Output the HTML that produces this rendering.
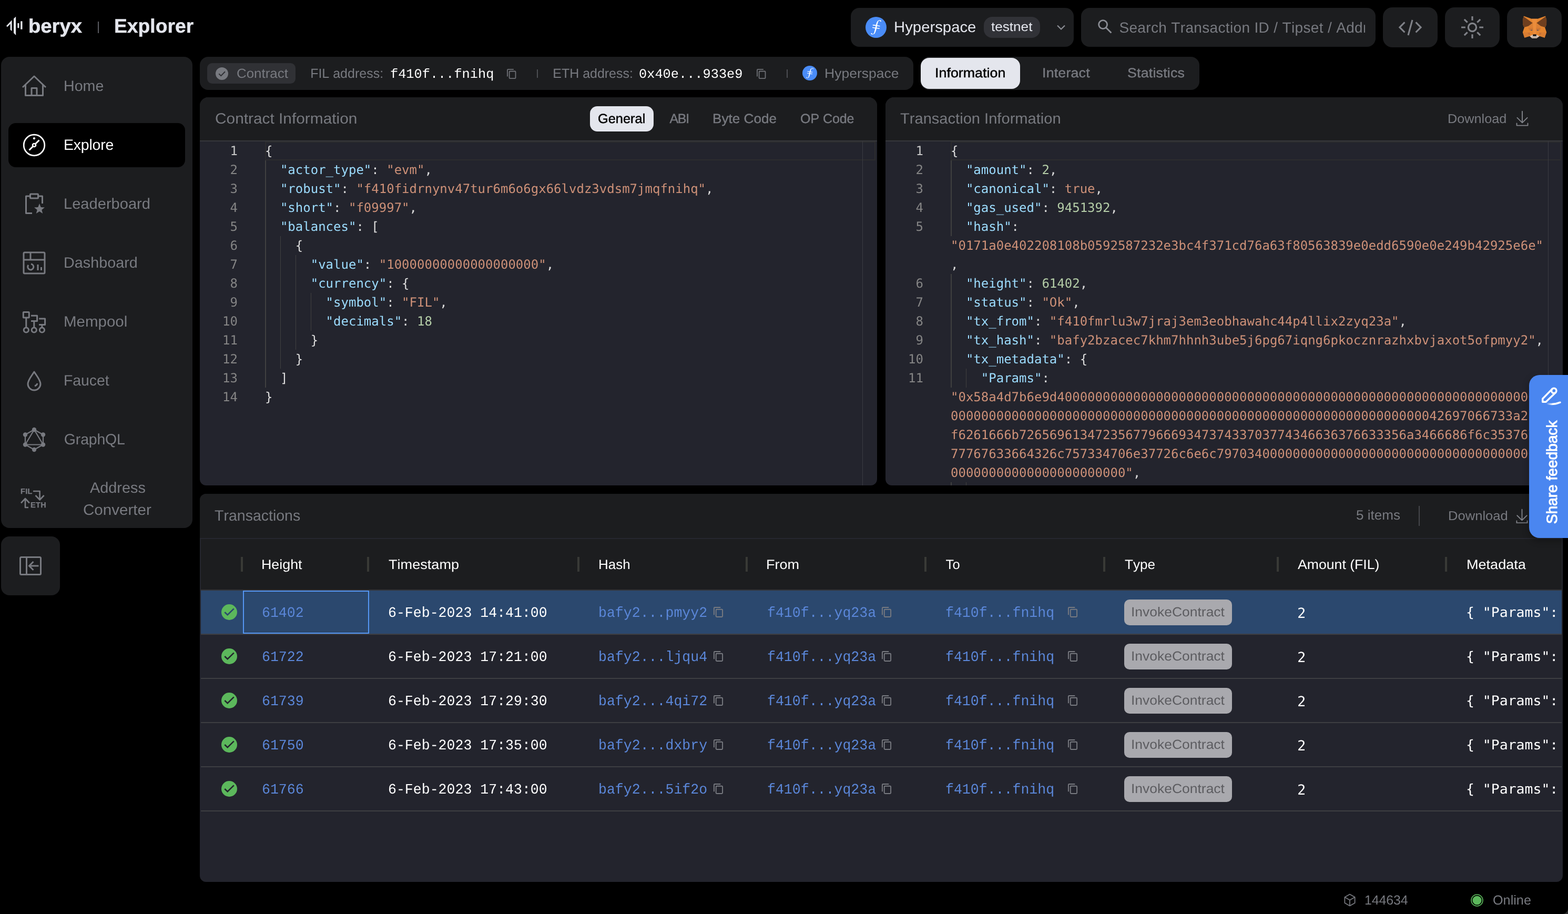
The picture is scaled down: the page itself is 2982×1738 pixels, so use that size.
<!DOCTYPE html>
<html lang="en">
<head>
<meta charset="utf-8">
<title>Beryx Explorer</title>
<style>
:root{--mono:"DejaVu Sans Mono","Liberation Mono",monospace;--lmono:"Liberation Mono",monospace}
html,body{margin:0;padding:0;background:#000}
body{position:relative;width:2982px;height:1738px;overflow:hidden;font-family:"Liberation Sans",sans-serif;font-kerning:none;-webkit-font-smoothing:antialiased;text-rendering:geometricPrecision}
#app{position:absolute;left:0;top:0;width:2982px;height:1738px;will-change:transform}
.b{position:absolute;display:block;box-sizing:border-box}
.t{position:absolute;display:block;white-space:pre;line-height:1;margin:0;padding:0;font-weight:400}
.k{color:#9cdcfe}.s{color:#ce9178}.n{color:#b5cea8}.p{color:#dcdcdc}
.cl{position:absolute;display:block;white-space:pre;font:24px/36px var(--mono);color:#d4d4d4;height:36px}
.ln{position:absolute;display:block;white-space:pre;font:24px/36px var(--mono);color:#858585;text-align:right;width:80px;height:36px}
</style>
</head>
<body>
<div id="app">
<header>
<svg class="b" style="left:10px;top:28px;" width="36" height="42" viewBox="10 28 36 42"><g fill="#e4e6ed"><path d="M12 49.2 L22.6 38.3 V59.2 L19.6 56.4 V45.6 L14 51.2 Z"/><path d="M26 35.6 L30.2 31.4 V67 L26 62.8 Z"/><rect x="33.4" y="44" width="3" height="9.2" rx="0.6"/><rect x="39.2" y="40.2" width="3.3" height="15.6" rx="0.6"/></g></svg>
<span class="t" style="left:54.08px;top:26px;font-size:37px;line-height:47px;font-weight:700;color:#e4e6ed;transform-origin:0 0;transform:scaleX(1.0331);-webkit-text-stroke:0.5px #e4e6ed;">beryx</span>
<div class="b" style="left:186px;top:41px;width:2px;height:22px;background:#5a5c62;"></div>
<span class="t" style="left:217.41px;top:26px;font-size:37px;line-height:47px;font-weight:700;color:#e4e6ed;transform-origin:0 0;transform:scaleX(1.0069);-webkit-text-stroke:0.4px #e4e6ed;">Explorer</span>
<div class="b" style="left:1618px;top:15px;width:424px;height:74px;background:#1c1d1f;border-radius:16px;"></div>
<svg class="b" style="left:1646px;top:32px;" width="40" height="40" viewBox="0 0 40 40"><circle cx="20" cy="20" r="20" fill="#4a8cf7"/><path d="M21.9 17.6 l-.6 3.2 5.7.8-.4 1.5-5.6-.8c-.4 1.3-.6 2.7-1.1 3.9-.5 1.4-1 2.8-1.6 4.1-.8 1.7-2.2 2.9-4.1 3.2-1.1.2-2.3.1-3.2-.6-.3-.2-.6-.6-.6-.9 0-.4.2-.9.5-1.1.2-.1.7 0 1 .1.3.3.6.7.8 1.1.6.8 1.4.9 2.2.3.9-.8 1.4-1.9 1.7-3 .6-2.4 1.2-4.7 1.7-7.1v-.4l-5.300-.8.2-1.5 5.5.8.700-3.100-5.7-.9.2-1.6 5.900.8c.2-.6.3-1.100.5-1.600.5-1.800 1-3.600 2.200-5.200 1.200-1.600 2.600-2.600 4.700-2.500.900 0 1.800.300 2.400 1 .100.100.300.300.300.500 0 .400 0 .900-.300 1.200-.400.300-.900.200-1.300-.200-.300-.300-.500-.600-.800-.900-.600-.800-1.500-.900-2.200-.200-.500.500-1 1.200-1.300 1.900-.700 2.100-1.200 4.300-1.900 6.500l5.500.800-.400 1.500z" fill="#fff"/></svg>
<span class="t" style="left:1700.00px;top:34px;font-size:28.5px;line-height:36px;color:#e4e6ed;transform-origin:0 0;transform:scaleX(1.0285);">Hyperspace</span>
<div class="b" style="left:1871px;top:32px;width:107px;height:40px;background:#313237;border-radius:16px;"></div>
<span class="t" style="left:1885.30px;top:36px;font-size:24.5px;line-height:31px;color:#e4e6ed;transform-origin:0 0;transform:scaleX(1.0658);">testnet</span>
<svg class="b" style="left:2006px;top:42px;" width="24" height="20" viewBox="0 0 24 20"><path d="M5 6.500 L12 13.500 L19 6.500" fill="none" stroke="#8b8d94" stroke-width="2.200"/></svg>
<div class="b" style="left:2056px;top:15px;width:560px;height:74px;background:#1c1d1f;border-radius:16px;"></div>
<svg class="b" style="left:2086px;top:35px;" width="32" height="32" viewBox="0 0 32 32"><circle cx="11.6" cy="11.6" r="8" fill="none" stroke="#8b8d94" stroke-width="2.8"/><path d="M17.4 17.4 L27.4 27.4" stroke="#8b8d94" stroke-width="2.8" fill="none"/></svg>
<div class="b" style="left:2120px;top:20px;width:476px;height:64px;overflow:hidden">
<span class="t" style="left:8.43px;top:15px;font-size:28px;line-height:35px;color:#787a80;letter-spacing:0.340px;">Search Transaction ID / Tipset / Address</span>
</div>
<div class="b" style="left:2630px;top:14px;width:104px;height:76px;background:#1c1d1f;border-radius:18px;"></div>
<svg class="b" style="left:2656px;top:34px;" width="52" height="36" viewBox="0 0 52 36"><g fill="none" stroke="#808288" stroke-width="3.1"><path d="M15.400 8.300 L5.900 17.900 L15.400 27.500"/><path d="M36.600 8.300 L46.100 17.900 L36.600 27.500"/><path d="M30 4 L22 33"/></g></svg>
<div class="b" style="left:2748px;top:14px;width:104px;height:76px;background:#1c1d1f;border-radius:18px;"></div>
<svg class="b" style="left:2776px;top:28.4px;" width="48" height="48" viewBox="-24 -24 48 48"><g fill="none" stroke="#808288" stroke-width="3.2"><circle r="7.600"/><path d="M0 -21V-13.200M0 21V13.200M-21 0H-13.200M21 0H13.200M-15.200 -15.200L-9.300 -9.300M15.200 15.200L9.300 9.300M-15.200 15.200L-9.300 9.300M15.200 -15.200L9.300 -9.300"/></g></svg>
<div class="b" style="left:2866px;top:14px;width:104px;height:76px;background:#1c1d1f;border-radius:18px;"></div>
<svg class="b" style="left:2880px;top:20px;" width="80" height="65" viewBox="0 0 1808 1469"><path d="M405 240 L740 355 H1000 L1335 240 L1382 400 L1380 585 L1345 690 L1312 722 L1382 935 L1302 1172 L1080 1102 L950 1196 H770 L660 1102 L437 1172 L358 935 L430 722 L398 690 L363 585 L360 400 Z" fill="#e4852f"/><path d="M398 262 L787 535 L612 664 L438 716 L398 690 L363 585 L360 400 Z" fill="#6f3f1f"/><path d="M1342 262 L953 535 L1128 664 L1302 716 L1345 690 L1380 585 L1382 400 Z" fill="#6f3f1f"/><path d="M742 358 H998 L940 560 L935 1010 H805 L800 560 Z" fill="#ea8c3b"/><path d="M596 748 L800 742 L798 860 L655 862 Z" fill="#cf7733"/><path d="M1144 748 L940 742 L942 860 L1085 862 Z" fill="#cf7733"/><path d="M612 664 L787 535 L800 742 L596 748 Z" fill="#dc8034"/><path d="M1128 664 L953 535 L940 742 L1144 748 Z" fill="#dc8034"/><ellipse cx="737" cy="846" rx="38" ry="18" fill="#3f4d6b"/><ellipse cx="1003" cy="846" rx="38" ry="18" fill="#3f4d6b"/><path d="M358 935 L570 946 L652 1092 L437 1172 Z" fill="#d97e33"/><path d="M1382 935 L1170 946 L1088 1092 L1302 1172 Z" fill="#d97e33"/><path d="M566 948 L676 950 L654 1086 Z" fill="#c67136"/><path d="M1174 948 L1064 950 L1086 1086 Z" fill="#c67136"/><path d="M660 1102 L792 1040 H948 L1080 1102 L950 1196 H770 Z" fill="#d7c3b4"/><path d="M772 1128 H948 L992 1162 L950 1196 H770 L728 1162 Z" fill="#b9ab9f"/><path d="M796 1024 H944 V1100 H796 Z" fill="#141414"/></svg>
</header>
<nav>
<div class="b" style="left:2px;top:108px;width:364px;height:896px;background:#1c1d1f;border-radius:16px;"></div>
<div class="b" style="left:16px;top:234px;width:336px;height:84px;background:#000;border-radius:14px;"></div>
<span class="t" style="left:120.95px;top:146px;font-size:28.5px;line-height:36px;color:#787a80;transform-origin:0 0;transform:scaleX(1.0039);">Home</span>
<span class="t" style="left:120.96px;top:258px;font-size:28.5px;line-height:36px;color:#ffffff;letter-spacing:-0.205px;">Explore</span>
<span class="t" style="left:120.91px;top:370px;font-size:28.5px;line-height:36px;color:#787a80;transform-origin:0 0;transform:scaleX(1.0206);">Leaderboard</span>
<span class="t" style="left:120.94px;top:482px;font-size:28.5px;line-height:36px;color:#787a80;transform-origin:0 0;transform:scaleX(1.0092);">Dashboard</span>
<span class="t" style="left:120.88px;top:594px;font-size:28.5px;line-height:36px;color:#787a80;transform-origin:0 0;transform:scaleX(1.0348);">Mempool</span>
<span class="t" style="left:120.96px;top:706px;font-size:28.5px;line-height:36px;color:#787a80;letter-spacing:-0.076px;">Faucet</span>
<span class="t" style="left:121.87px;top:818px;font-size:28.5px;line-height:36px;color:#787a80;letter-spacing:-0.191px;">GraphQL</span>
<span class="t" style="left:170.54px;top:910px;font-size:28.5px;line-height:36px;color:#787a80;transform-origin:0 0;transform:scaleX(1.0129);">Address</span>
<span class="t" style="left:157.50px;top:952px;font-size:28.5px;line-height:36px;color:#787a80;transform-origin:0 0;transform:scaleX(1.0380);">Converter</span>
<svg class="b" style="left:41px;top:139.5px;" width="48" height="48" viewBox="-24.0 -24.0 48 48"><g fill="none" stroke="#787a80" stroke-width="3" stroke-linejoin="round"><path d="M-22 2 L0 -19 L22 2"/><path d="M-16.500 -3 V17.500 H16.500 V-3"/><path d="M-5 17 V3.500 H5 V17"/></g></svg>
<svg class="b" style="left:41px;top:251.5px;" width="48" height="48" viewBox="-24.0 -24.0 48 48"><g fill="none" stroke="#fff" stroke-width="3" stroke-linejoin="round"><g stroke-width="2.700"><circle r="19.800"/><circle r="3"/></g><path d="M2.200 -2.200 L9.500 -9.500 M-2.200 2.200 L-9.500 9.500"/><circle cx="0" cy="-12.800" r="2.100" fill="#fff" stroke="none"/></g></svg>
<svg class="b" style="left:41px;top:363.5px;" width="48" height="48" viewBox="-24.0 -24.0 48 48"><g fill="none" stroke="#787a80" stroke-width="3" stroke-linejoin="round"><path d="M-4 17.500 H-15.500 V-15 H-9 M9 -15 H15.500 V-1"/><rect x="-7.500" y="-19" width="15" height="8" rx="1"/><path d="M10 -1 L12.700 6 L20 6.500 L14.300 11 L16.200 18 L10 14 L3.800 18 L5.700 11 L0 6.500 L7.300 6 Z" fill="#787a80" stroke="none"/></g></svg>
<svg class="b" style="left:41px;top:475.5px;" width="48" height="48" viewBox="-24.0 -24.0 48 48"><g fill="none" stroke="#787a80" stroke-width="3" stroke-linejoin="round"><rect x="-20" y="-20" width="40" height="40" rx="2"/><path d="M-20 -6 H20 M-7 -20 V-6"/><path d="M-11 4 a5.500 5.500 0 1 0 5 -2"/><path d="M7 3 V14 M13.500 8 V14"/></g></svg>
<svg class="b" style="left:41px;top:587.5px;" width="48" height="48" viewBox="-24.0 -24.0 48 48"><g fill="none" stroke="#787a80" stroke-width="3" stroke-linejoin="round"><rect x="-20.700" y="-18.400" width="11" height="10.500" rx="1"/><circle cx="-15.200" cy="15.500" r="4.600"/><circle cx="-0.200" cy="15.500" r="4.600"/><circle cx="14.900" cy="15.500" r="4.600"/><path d="M-15.200 -7.900 V10.900 M-6 -11.800 H5.600 V-1.400 H-6 M-0.200 -1.400 V10.900 M9.100 -6 H20.600 V5.600 H9.100 M14.900 5.600 V10.900"/></g></svg>
<svg class="b" style="left:41px;top:699.5px;" width="48" height="48" viewBox="-24.0 -24.0 48 48"><g fill="none" stroke="#787a80" stroke-width="3" stroke-linejoin="round"><path d="M0 -17 C-5 -9 -12 -1 -12 6 a12 12 0 0 0 24 0 C12 -1 5 -9 0 -17 Z"/><path d="M1 10 Q5 9 6 5"/></g></svg>
<svg class="b" style="left:41px;top:811.5px;" width="48" height="48" viewBox="-24.0 -24.0 48 48"><g fill="none" stroke="#787a80" stroke-width="3" stroke-linejoin="round"><g stroke-width="2.200"><path d="M0 -19 L17 -9.500 V9.500 L0 19 L-17 9.500 V-9.500 Z"/><path d="M0 -19 L17 9.500 H-17 Z"/></g><circle cx="0" cy="-19" r="4.200" fill="#787a80" stroke="none"/><circle cx="17" cy="-9.5" r="4.200" fill="#787a80" stroke="none"/><circle cx="17" cy="9.5" r="4.200" fill="#787a80" stroke="none"/><circle cx="0" cy="19" r="4.200" fill="#787a80" stroke="none"/><circle cx="-17" cy="9.5" r="4.200" fill="#787a80" stroke="none"/><circle cx="-17" cy="-9.5" r="4.200" fill="#787a80" stroke="none"/></g></svg>
<svg class="b" style="left:36px;top:923.5px;" width="56" height="48" viewBox="36 -24 56 48"><g fill="none" stroke="#787a80" stroke-width="2.600" stroke-linejoin="round"><path d="M63 -14 H75.600 V1.500 M67.500 -6 L75.600 2.500 L83.700 -6"/><path d="M54 17 H48 V1 M40 8.500 L48 0 L56 8.500"/></g></svg>
<span class="t" style="left:39px;top:928.0px;font-size:14.5px;font-weight:700;color:#787a80;letter-spacing:0.300px;-webkit-text-stroke:0.300px #787a80">FIL</span>
<span class="t" style="left:58px;top:954.0px;font-size:14.5px;font-weight:700;color:#787a80;letter-spacing:0.300px;-webkit-text-stroke:0.300px #787a80">ETH</span>
<div class="b" style="left:2px;top:1020px;width:112px;height:112px;background:#1c1d1f;border-radius:16px;"></div>
<svg class="b" style="left:36px;top:1056px;" width="44" height="40" viewBox="0 0 44 40"><g fill="none" stroke="#787a80" stroke-width="3"><rect x="2.500" y="3.500" width="39" height="33" rx="2"/><path d="M14.500 3.500V36.500M37.500 20H20M27.500 12L19.500 20L27.500 28"/></g></svg>
</nav>
<main>
<div class="b" style="left:380px;top:108px;width:1357px;height:63px;background:#1c1d1f;border-radius:16px;"></div>
<div class="b" style="left:394px;top:120px;width:168px;height:39px;background:#303135;border-radius:9.5px;"></div>
<svg class="b" style="left:410px;top:128px;" width="24" height="24" viewBox="0 0 24 24"><circle cx="12" cy="12" r="12" fill="#787a80"/><path d="M6.300 12.200 L10.300 16.100 L18 8.300" fill="none" stroke="#2f3034" stroke-width="2"/></svg>
<span class="t" style="left:449.88px;top:124px;font-size:25px;line-height:32px;color:#787a80;transform-origin:0 0;transform:scaleX(1.0362);">Contract</span>
<span class="t" style="left:590.15px;top:124px;font-size:25px;line-height:32px;color:#787a80;">FIL address:</span>
<span class="t" style="left:742.30px;top:126px;font-size:25px;line-height:32px;font-family:var(--lmono);color:#ffffff;transform-origin:0 0;transform:scaleX(1.0117);">f410f...fnihq</span>
<svg class="b" style="left:963px;top:130px;" width="19.5" height="21" viewBox="0 0 21 23"><g fill="none" stroke="#6e7076" stroke-width="2"><rect x="6" y="6" width="13" height="15" rx="1.500"/><path d="M15 2 H3.500 A1.500 1.500 0 0 0 2 3.500 V17"/></g></svg>
<div class="b" style="left:1021px;top:132px;width:2px;height:16px;background:#4c4e53;"></div>
<span class="t" style="left:1051.35px;top:124px;font-size:25px;line-height:32px;color:#787a80;letter-spacing:-0.027px;">ETH address:</span>
<span class="t" style="left:1215.47px;top:126px;font-size:25px;line-height:32px;font-family:var(--lmono);color:#ffffff;transform-origin:0 0;transform:scaleX(1.0126);">0x40e...933e9</span>
<svg class="b" style="left:1438px;top:130px;" width="19.5" height="21" viewBox="0 0 21 23"><g fill="none" stroke="#6e7076" stroke-width="2"><rect x="6" y="6" width="13" height="15" rx="1.500"/><path d="M15 2 H3.500 A1.500 1.500 0 0 0 2 3.500 V17"/></g></svg>
<div class="b" style="left:1496px;top:132px;width:2px;height:16px;background:#4c4e53;"></div>
<svg class="b" style="left:1526px;top:125px;" width="28" height="28" viewBox="0 0 40 40"><circle cx="20" cy="20" r="20" fill="#4a8cf7"/><path d="M21.9 17.6 l-.6 3.2 5.7.8-.4 1.5-5.6-.8c-.4 1.3-.6 2.7-1.1 3.9-.5 1.4-1 2.8-1.6 4.1-.8 1.7-2.2 2.9-4.1 3.2-1.1.2-2.3.1-3.2-.6-.3-.2-.6-.6-.6-.9 0-.4.2-.9.5-1.1.2-.1.7 0 1 .1.3.3.6.7.8 1.1.6.8 1.4.9 2.2.3.9-.8 1.4-1.9 1.7-3 .6-2.4 1.2-4.7 1.7-7.1v-.4l-5.300-.8.2-1.5 5.5.8.700-3.100-5.7-.9.2-1.6 5.900.8c.2-.6.3-1.100.5-1.600.5-1.800 1-3.600 2.200-5.200 1.200-1.600 2.600-2.600 4.700-2.500.900 0 1.800.300 2.400 1 .100.100.300.300.300.500 0 .400 0 .900-.300 1.200-.400.300-.900.200-1.300-.200-.300-.300-.500-.600-.800-.900-.600-.800-1.500-.900-2.200-.200-.500.500-1 1.200-1.300 1.900-.700 2.100-1.200 4.300-1.900 6.500l5.500.800-.400 1.500z" fill="#fff"/></svg>
<span class="t" style="left:1567.73px;top:124px;font-size:25px;line-height:32px;color:#787a80;transform-origin:0 0;transform:scaleX(1.0604);">Hyperspace</span>
<div class="b" style="left:1751px;top:108px;width:530px;height:63px;background:#1c1d1f;border-radius:16px;"></div>
<div class="b" style="left:1751px;top:110px;width:189px;height:59px;background:#e4e6ed;border-radius:16px;"></div>
<span class="t" style="left:1778.33px;top:123px;font-size:25px;line-height:32px;color:#000;letter-spacing:0.046px;transform-origin:0 0;transform:scaleX(1.0700);-webkit-text-stroke:0.5px #000;">Information</span>
<span class="t" style="left:1981.73px;top:123px;font-size:25px;line-height:32px;color:#787a80;letter-spacing:0.181px;transform-origin:0 0;transform:scaleX(1.0700);-webkit-text-stroke:0.4px #787a80;">Interact</span>
<span class="t" style="left:2143.99px;top:123px;font-size:25px;line-height:32px;color:#787a80;letter-spacing:0.193px;transform-origin:0 0;transform:scaleX(1.0700);-webkit-text-stroke:0.4px #787a80;">Statistics</span>
<section class="b" style="left:380px;top:185px;width:1288px;height:738px;background:#23242d;border-radius:16px 16px 12px 12px;overflow:hidden;"><div class="b" style="left:0;top:0;width:100%;height:84px;background:#1c1d1f;border-bottom:2px solid #36373b"></div></section>
<span class="t" style="left:408.58px;top:208px;font-size:28.5px;line-height:36px;color:#787a80;transform-origin:0 0;transform:scaleX(1.0471);">Contract Information</span>
<div class="b" style="left:1122px;top:202px;width:121px;height:48px;background:#e4e6ed;border-radius:14px;"></div>
<span class="t" style="left:1137.22px;top:210px;font-size:25px;line-height:32px;color:#000;transform-origin:0 0;transform:scaleX(1.0150);-webkit-text-stroke:0.5px #000;">General</span>
<span class="t" style="left:1273.55px;top:210px;font-size:25px;line-height:32px;color:#787a80;letter-spacing:-1.370px;-webkit-text-stroke:0.4px #787a80;">ABI</span>
<span class="t" style="left:1355.05px;top:210px;font-size:25px;line-height:32px;color:#787a80;transform-origin:0 0;transform:scaleX(1.0460);-webkit-text-stroke:0.4px #787a80;">Byte Code</span>
<span class="t" style="left:1522.02px;top:210px;font-size:25px;line-height:32px;color:#787a80;letter-spacing:-0.056px;-webkit-text-stroke:0.4px #787a80;">OP Code</span>
<div class="b" style="left:380px;top:269px;width:1288px;height:654px;overflow:hidden;border-radius:0 0 12px 12px">
<div class="b" style="left:124px;top:0;width:1161px;height:36px;border:2px solid #2c2c2e"></div>
<div class="b" style="left:1260px;top:0;width:1px;height:654px;background:#3a3b42"></div>
<div class="b" style="left:124.00px;top:36px;width:1.500px;height:432px;background:#404040"></div>
<div class="b" style="left:152.90px;top:180px;width:1.500px;height:252px;background:#404040"></div>
<div class="b" style="left:181.79px;top:216px;width:1.500px;height:180px;background:#404040"></div>
<div class="b" style="left:210.69px;top:288px;width:1.500px;height:72px;background:#404040"></div>
<span class="ln" style="left:-8px;top:0px;color:#c6c6c6">1</span>
<code class="cl" style="left:124px;top:0px"><span class="p">{</span></code>
<span class="ln" style="left:-8px;top:36px">2</span>
<code class="cl" style="left:124px;top:36px">  <span class="k">"actor_type"</span><span class="p">: </span><span class="s">"evm"</span><span class="p">,</span></code>
<span class="ln" style="left:-8px;top:72px">3</span>
<code class="cl" style="left:124px;top:72px">  <span class="k">"robust"</span><span class="p">: </span><span class="s">"f410fidrnynv47tur6m6o6gx66lvdz3vdsm7jmqfnihq"</span><span class="p">,</span></code>
<span class="ln" style="left:-8px;top:108px">4</span>
<code class="cl" style="left:124px;top:108px">  <span class="k">"short"</span><span class="p">: </span><span class="s">"f09997"</span><span class="p">,</span></code>
<span class="ln" style="left:-8px;top:144px">5</span>
<code class="cl" style="left:124px;top:144px">  <span class="k">"balances"</span><span class="p">: [</span></code>
<span class="ln" style="left:-8px;top:180px">6</span>
<code class="cl" style="left:124px;top:180px">    <span class="p">{</span></code>
<span class="ln" style="left:-8px;top:216px">7</span>
<code class="cl" style="left:124px;top:216px">      <span class="k">"value"</span><span class="p">: </span><span class="s">"10000000000000000000"</span><span class="p">,</span></code>
<span class="ln" style="left:-8px;top:252px">8</span>
<code class="cl" style="left:124px;top:252px">      <span class="k">"currency"</span><span class="p">: {</span></code>
<span class="ln" style="left:-8px;top:288px">9</span>
<code class="cl" style="left:124px;top:288px">        <span class="k">"symbol"</span><span class="p">: </span><span class="s">"FIL"</span><span class="p">,</span></code>
<span class="ln" style="left:-8px;top:324px">10</span>
<code class="cl" style="left:124px;top:324px">        <span class="k">"decimals"</span><span class="p">: </span><span class="n">18</span></code>
<span class="ln" style="left:-8px;top:360px">11</span>
<code class="cl" style="left:124px;top:360px">      <span class="p">}</span></code>
<span class="ln" style="left:-8px;top:396px">12</span>
<code class="cl" style="left:124px;top:396px">    <span class="p">}</span></code>
<span class="ln" style="left:-8px;top:432px">13</span>
<code class="cl" style="left:124px;top:432px">  <span class="p">]</span></code>
<span class="ln" style="left:-8px;top:468px">14</span>
<code class="cl" style="left:124px;top:468px"><span class="p">}</span></code>
</div>
<section class="b" style="left:1684px;top:185px;width:1288px;height:738px;background:#23242d;border-radius:16px 16px 12px 12px;overflow:hidden;"><div class="b" style="left:0;top:0;width:100%;height:84px;background:#1c1d1f;border-bottom:2px solid #36373b"></div></section>
<span class="t" style="left:1712.25px;top:208px;font-size:28.5px;line-height:36px;color:#787a80;transform-origin:0 0;transform:scaleX(1.0209);">Transaction Information</span>
<span class="t" style="left:2752.53px;top:211px;font-size:24.5px;line-height:31px;color:#787a80;transform-origin:0 0;transform:scaleX(1.0307);">Download</span>
<svg class="b" style="left:2882px;top:210px;" width="26" height="30" viewBox="0 0 26 30"><g fill="none" stroke="#83858b" stroke-width="1.9" stroke-linecap="round" stroke-linejoin="round"><path d="M13 1.8 V23 M3.4 13.8 L13 23.4 L22.6 13.8 M2.5 24.5 V28.6 H23.5 V24.5"/></g></svg>
<div class="b" style="left:1684px;top:269px;width:1288px;height:654px;overflow:hidden;border-radius:0 0 12px 12px">
<div class="b" style="left:124px;top:0;width:1161px;height:36px;border:2px solid #2c2c2e"></div>
<div class="b" style="left:1260px;top:0;width:1px;height:654px;background:#3a3b42"></div>
<div class="b" style="left:124.00px;top:36px;width:1.500px;height:144px;background:#404040"></div>
<div class="b" style="left:124.00px;top:252px;width:1.500px;height:216px;background:#404040"></div>
<div class="b" style="left:152.90px;top:432px;width:1.500px;height:36px;background:#404040"></div>
<div class="b" style="left:124.00px;top:648px;width:1.500px;height:36px;background:#404040"></div>
<div class="b" style="left:152.90px;top:648px;width:1.500px;height:36px;background:#404040"></div>
<span class="ln" style="left:-8px;top:0px;color:#c6c6c6">1</span>
<code class="cl" style="left:124px;top:0px"><span class="p">{</span></code>
<span class="ln" style="left:-8px;top:36px">2</span>
<code class="cl" style="left:124px;top:36px">  <span class="k">"amount"</span><span class="p">: </span><span class="n">2</span><span class="p">,</span></code>
<span class="ln" style="left:-8px;top:72px">3</span>
<code class="cl" style="left:124px;top:72px">  <span class="k">"canonical"</span><span class="p">: </span><span class="s">true</span><span class="p">,</span></code>
<span class="ln" style="left:-8px;top:108px">4</span>
<code class="cl" style="left:124px;top:108px">  <span class="k">"gas_used"</span><span class="p">: </span><span class="n">9451392</span><span class="p">,</span></code>
<span class="ln" style="left:-8px;top:144px">5</span>
<code class="cl" style="left:124px;top:144px">  <span class="k">"hash"</span><span class="p">: </span></code>
<code class="cl" style="left:124px;top:180px"><span class="s">"0171a0e402208108b0592587232e3bc4f371cd76a63f80563839e0edd6590e0e249b42925e6e"</span></code>
<code class="cl" style="left:124px;top:216px"><span class="p">,</span></code>
<span class="ln" style="left:-8px;top:252px">6</span>
<code class="cl" style="left:124px;top:252px">  <span class="k">"height"</span><span class="p">: </span><span class="n">61402</span><span class="p">,</span></code>
<span class="ln" style="left:-8px;top:288px">7</span>
<code class="cl" style="left:124px;top:288px">  <span class="k">"status"</span><span class="p">: </span><span class="s">"Ok"</span><span class="p">,</span></code>
<span class="ln" style="left:-8px;top:324px">8</span>
<code class="cl" style="left:124px;top:324px">  <span class="k">"tx_from"</span><span class="p">: </span><span class="s">"f410fmrlu3w7jraj3em3eobhawahc44p4llix2zyq23a"</span><span class="p">,</span></code>
<span class="ln" style="left:-8px;top:360px">9</span>
<code class="cl" style="left:124px;top:360px">  <span class="k">"tx_hash"</span><span class="p">: </span><span class="s">"bafy2bzacec7khm7hhnh3ube5j6pg67iqng6pkocznrazhxbvjaxot5ofpmyy2"</span><span class="p">,</span></code>
<span class="ln" style="left:-8px;top:396px">10</span>
<code class="cl" style="left:124px;top:396px">  <span class="k">"tx_metadata"</span><span class="p">: {</span></code>
<span class="ln" style="left:-8px;top:432px">11</span>
<code class="cl" style="left:124px;top:432px">    <span class="k">"Params"</span><span class="p">: </span></code>
<code class="cl" style="left:124px;top:468px"><span class="s">"0x58a4d7b6e9d4000000000000000000000000000000000000000000000000000000000000002</span></code>
<code class="cl" style="left:124px;top:504px"><span class="s">00000000000000000000000000000000000000000000000000000000000000042697066733a2f2</span></code>
<code class="cl" style="left:124px;top:540px"><span class="s">f6261666b726569613472356779666934737433703774346636376633356a3466686f6c3537677</span></code>
<code class="cl" style="left:124px;top:576px"><span class="s">77767633664326c757334706e37726c6e6c7970340000000000000000000000000000000000000</span></code>
<code class="cl" style="left:124px;top:612px"><span class="s">00000000000000000000000"</span><span class="p">,</span></code>
</div>
<section class="b" style="left:380px;top:939px;width:2592px;height:738px;background:#23242d;border-radius:12px;overflow:hidden;"><div class="b" style="left:0;top:0;width:100%;height:182px;background:#1c1d1f"></div><div class="b" style="left:0;top:84px;width:100%;height:2px;background:#26272f"></div><div class="b" style="left:0;top:86px;width:2px;height:100px;background:#25262e"></div><div class="b" style="right:0;top:86px;width:2px;height:100px;background:#25262e"></div></section>
<span class="t" style="left:408.06px;top:963px;font-size:28.5px;line-height:36px;color:#787a80;">Transactions</span>
<span class="t" style="left:2578.96px;top:964px;font-size:25.5px;line-height:32px;color:#787a80;transform-origin:0 0;transform:scaleX(1.0231);">5 items</span>
<div class="b" style="left:2698px;top:962px;width:2px;height:38px;background:#46474b;"></div>
<span class="t" style="left:2753.90px;top:966px;font-size:24.5px;line-height:31px;color:#787a80;transform-origin:0 0;transform:scaleX(1.0439);">Download</span>
<svg class="b" style="left:2882.4px;top:966.5px;" width="25" height="28.8" viewBox="0 0 26 30"><g fill="none" stroke="#83858b" stroke-width="1.9" stroke-linecap="round" stroke-linejoin="round"><path d="M13 1.8 V23 M3.4 13.8 L13 23.4 L22.6 13.8 M2.5 24.5 V28.6 H23.5 V24.5"/></g></svg>
<div class="b" style="left:382px;top:1023px;width:2588px;height:654px;overflow:hidden">
<div class="b" style="left:76px;top:36px;width:4px;height:28px;background:#393a36"></div>
<div class="b" style="left:315.6px;top:36px;width:4px;height:28px;background:#393a36"></div>
<div class="b" style="left:716px;top:36px;width:4px;height:28px;background:#393a36"></div>
<div class="b" style="left:1036px;top:36px;width:4px;height:28px;background:#393a36"></div>
<div class="b" style="left:1376px;top:36px;width:4px;height:28px;background:#393a36"></div>
<div class="b" style="left:1716px;top:36px;width:4px;height:28px;background:#393a36"></div>
<div class="b" style="left:2046px;top:36px;width:4px;height:28px;background:#393a36"></div>
<div class="b" style="left:2366px;top:36px;width:4px;height:28px;background:#393a36"></div>
<span class="t" style="left:115.30px;top:35px;font-size:25.5px;line-height:32px;color:#ffffff;transform-origin:0 0;transform:scaleX(1.0513);">Height</span>
<span class="t" style="left:356.89px;top:35px;font-size:25.5px;line-height:32px;color:#ffffff;transform-origin:0 0;transform:scaleX(1.0630);">Timestamp</span>
<span class="t" style="left:755.67px;top:35px;font-size:25.5px;line-height:32px;color:#ffffff;transform-origin:0 0;transform:scaleX(1.0183);">Hash</span>
<span class="t" style="left:1075.08px;top:35px;font-size:25.5px;line-height:32px;color:#ffffff;transform-origin:0 0;transform:scaleX(1.0607);">From</span>
<span class="t" style="left:1416.43px;top:35px;font-size:25.5px;line-height:32px;color:#ffffff;letter-spacing:-2.515px;">To</span>
<span class="t" style="left:1757.01px;top:35px;font-size:25.5px;line-height:32px;color:#ffffff;transform-origin:0 0;transform:scaleX(1.0257);">Type</span>
<span class="t" style="left:2086.05px;top:35px;font-size:25.5px;line-height:32px;color:#ffffff;transform-origin:0 0;transform:scaleX(1.0444);">Amount (FIL)</span>
<span class="t" style="left:2406.58px;top:35px;font-size:25.5px;line-height:32px;color:#ffffff;transform-origin:0 0;transform:scaleX(1.0611);">Metadata</span>
<div class="b" style="left:0;top:98px;width:2588px;height:2px;background:#34353a"></div>
<div class="b" style="left:0;top:100px;width:2588px;height:84px;background:#2b486e;border-bottom:2px solid #3d3e42">
<div class="b" style="left:80px;top:0;width:240px;height:82px;border:2px solid #5596f3"></div>
<svg class="b" style="left:39px;top:26px;" width="30" height="30" viewBox="0 0 30 30"><circle cx="15" cy="15" r="15" fill="#5cb85c"/><path d="M6.300 15 L11.700 20.300 L23.800 8.400" fill="none" stroke="#2b486e" stroke-width="2.600"/></svg>
<span class="t" style="left:115.64px;top:26px;font-size:27.5px;line-height:35px;font-family:var(--lmono);color:#5b87d9;transform-origin:0 0;transform:scaleX(0.9655);">61402</span>
<span class="t" style="left:356.04px;top:26px;font-size:27.5px;line-height:35px;font-family:var(--lmono);color:#ffffff;transform-origin:0 0;transform:scaleX(0.9655);">6-Feb-2023 14:41:00</span>
<span class="t" style="left:756.08px;top:26px;font-size:27.5px;line-height:35px;font-family:var(--lmono);color:#5b87d9;transform-origin:0 0;transform:scaleX(0.9655);">bafy2...pmyy2</span>
<svg class="b" style="left:974px;top:30px;" width="20" height="22" viewBox="0 0 21 23"><g fill="none" stroke="#787a80" stroke-width="2"><rect x="6" y="6" width="13" height="15" rx="1.500"/><path d="M15 2 H3.500 A1.500 1.500 0 0 0 2 3.500 V17"/></g></svg>
<span class="t" style="left:1077.01px;top:26px;font-size:27.5px;line-height:35px;font-family:var(--lmono);color:#5b87d9;transform-origin:0 0;transform:scaleX(0.9655);">f410f...yq23a</span>
<svg class="b" style="left:1294px;top:30px;" width="20" height="22" viewBox="0 0 21 23"><g fill="none" stroke="#787a80" stroke-width="2"><rect x="6" y="6" width="13" height="15" rx="1.500"/><path d="M15 2 H3.500 A1.500 1.500 0 0 0 2 3.500 V17"/></g></svg>
<span class="t" style="left:1416.41px;top:26px;font-size:27.5px;line-height:35px;font-family:var(--lmono);color:#5b87d9;transform-origin:0 0;transform:scaleX(0.9655);">f410f...fnihq</span>
<svg class="b" style="left:1648px;top:30px;" width="20" height="22" viewBox="0 0 21 23"><g fill="none" stroke="#787a80" stroke-width="2"><rect x="6" y="6" width="13" height="15" rx="1.500"/><path d="M15 2 H3.500 A1.500 1.500 0 0 0 2 3.500 V17"/></g></svg>
<div class="b" style="left:1756px;top:17px;width:205px;height:49px;background:#a9a9ae;border-radius:10px;"></div>
<span class="t" style="left:1768.86px;top:25px;font-size:25px;line-height:32px;color:#5c5c60;transform-origin:0 0;transform:scaleX(1.0583);">InvokeContract</span>
<span class="t" style="left:2085.33px;top:27px;font-size:26.5px;line-height:34px;font-family:var(--mono);color:#ffffff;">2</span>
<span class="t" style="left:2406.44px;top:26px;font-size:25.5px;line-height:32px;font-family:var(--mono);color:#ffffff;transform-origin:0 0;transform:scaleX(1.0377);">{ "Params": "0x58a4d7b6e9d4</span>
</div>
<div class="b" style="left:0;top:184px;width:2588px;height:84px;background:transparent;border-bottom:2px solid #3d3e42">
<svg class="b" style="left:39px;top:26px;" width="30" height="30" viewBox="0 0 30 30"><circle cx="15" cy="15" r="15" fill="#5cb85c"/><path d="M6.300 15 L11.700 20.300 L23.800 8.400" fill="none" stroke="#23242d" stroke-width="2.600"/></svg>
<span class="t" style="left:115.64px;top:26px;font-size:27.5px;line-height:35px;font-family:var(--lmono);color:#5b87d9;transform-origin:0 0;transform:scaleX(0.9655);">61722</span>
<span class="t" style="left:356.04px;top:26px;font-size:27.5px;line-height:35px;font-family:var(--lmono);color:#ffffff;transform-origin:0 0;transform:scaleX(0.9655);">6-Feb-2023 17:21:00</span>
<span class="t" style="left:756.08px;top:26px;font-size:27.5px;line-height:35px;font-family:var(--lmono);color:#5b87d9;transform-origin:0 0;transform:scaleX(0.9655);">bafy2...ljqu4</span>
<svg class="b" style="left:974px;top:30px;" width="20" height="22" viewBox="0 0 21 23"><g fill="none" stroke="#787a80" stroke-width="2"><rect x="6" y="6" width="13" height="15" rx="1.500"/><path d="M15 2 H3.500 A1.500 1.500 0 0 0 2 3.500 V17"/></g></svg>
<span class="t" style="left:1077.01px;top:26px;font-size:27.5px;line-height:35px;font-family:var(--lmono);color:#5b87d9;transform-origin:0 0;transform:scaleX(0.9655);">f410f...yq23a</span>
<svg class="b" style="left:1294px;top:30px;" width="20" height="22" viewBox="0 0 21 23"><g fill="none" stroke="#787a80" stroke-width="2"><rect x="6" y="6" width="13" height="15" rx="1.500"/><path d="M15 2 H3.500 A1.500 1.500 0 0 0 2 3.500 V17"/></g></svg>
<span class="t" style="left:1416.41px;top:26px;font-size:27.5px;line-height:35px;font-family:var(--lmono);color:#5b87d9;transform-origin:0 0;transform:scaleX(0.9655);">f410f...fnihq</span>
<svg class="b" style="left:1648px;top:30px;" width="20" height="22" viewBox="0 0 21 23"><g fill="none" stroke="#787a80" stroke-width="2"><rect x="6" y="6" width="13" height="15" rx="1.500"/><path d="M15 2 H3.500 A1.500 1.500 0 0 0 2 3.500 V17"/></g></svg>
<div class="b" style="left:1756px;top:17px;width:205px;height:49px;background:#a9a9ae;border-radius:10px;"></div>
<span class="t" style="left:1768.86px;top:25px;font-size:25px;line-height:32px;color:#5c5c60;transform-origin:0 0;transform:scaleX(1.0583);">InvokeContract</span>
<span class="t" style="left:2085.33px;top:27px;font-size:26.5px;line-height:34px;font-family:var(--mono);color:#ffffff;">2</span>
<span class="t" style="left:2406.44px;top:26px;font-size:25.5px;line-height:32px;font-family:var(--mono);color:#ffffff;transform-origin:0 0;transform:scaleX(1.0377);">{ "Params": "0x58a4d7b6e9d4</span>
</div>
<div class="b" style="left:0;top:268px;width:2588px;height:84px;background:transparent;border-bottom:2px solid #3d3e42">
<svg class="b" style="left:39px;top:26px;" width="30" height="30" viewBox="0 0 30 30"><circle cx="15" cy="15" r="15" fill="#5cb85c"/><path d="M6.300 15 L11.700 20.300 L23.800 8.400" fill="none" stroke="#23242d" stroke-width="2.600"/></svg>
<span class="t" style="left:115.64px;top:26px;font-size:27.5px;line-height:35px;font-family:var(--lmono);color:#5b87d9;transform-origin:0 0;transform:scaleX(0.9655);">61739</span>
<span class="t" style="left:356.04px;top:26px;font-size:27.5px;line-height:35px;font-family:var(--lmono);color:#ffffff;transform-origin:0 0;transform:scaleX(0.9655);">6-Feb-2023 17:29:30</span>
<span class="t" style="left:756.08px;top:26px;font-size:27.5px;line-height:35px;font-family:var(--lmono);color:#5b87d9;transform-origin:0 0;transform:scaleX(0.9655);">bafy2...4qi72</span>
<svg class="b" style="left:974px;top:30px;" width="20" height="22" viewBox="0 0 21 23"><g fill="none" stroke="#787a80" stroke-width="2"><rect x="6" y="6" width="13" height="15" rx="1.500"/><path d="M15 2 H3.500 A1.500 1.500 0 0 0 2 3.500 V17"/></g></svg>
<span class="t" style="left:1077.01px;top:26px;font-size:27.5px;line-height:35px;font-family:var(--lmono);color:#5b87d9;transform-origin:0 0;transform:scaleX(0.9655);">f410f...yq23a</span>
<svg class="b" style="left:1294px;top:30px;" width="20" height="22" viewBox="0 0 21 23"><g fill="none" stroke="#787a80" stroke-width="2"><rect x="6" y="6" width="13" height="15" rx="1.500"/><path d="M15 2 H3.500 A1.500 1.500 0 0 0 2 3.500 V17"/></g></svg>
<span class="t" style="left:1416.41px;top:26px;font-size:27.5px;line-height:35px;font-family:var(--lmono);color:#5b87d9;transform-origin:0 0;transform:scaleX(0.9655);">f410f...fnihq</span>
<svg class="b" style="left:1648px;top:30px;" width="20" height="22" viewBox="0 0 21 23"><g fill="none" stroke="#787a80" stroke-width="2"><rect x="6" y="6" width="13" height="15" rx="1.500"/><path d="M15 2 H3.500 A1.500 1.500 0 0 0 2 3.500 V17"/></g></svg>
<div class="b" style="left:1756px;top:17px;width:205px;height:49px;background:#a9a9ae;border-radius:10px;"></div>
<span class="t" style="left:1768.86px;top:25px;font-size:25px;line-height:32px;color:#5c5c60;transform-origin:0 0;transform:scaleX(1.0583);">InvokeContract</span>
<span class="t" style="left:2085.33px;top:27px;font-size:26.5px;line-height:34px;font-family:var(--mono);color:#ffffff;">2</span>
<span class="t" style="left:2406.44px;top:26px;font-size:25.5px;line-height:32px;font-family:var(--mono);color:#ffffff;transform-origin:0 0;transform:scaleX(1.0377);">{ "Params": "0x58a4d7b6e9d4</span>
</div>
<div class="b" style="left:0;top:352px;width:2588px;height:84px;background:transparent;border-bottom:2px solid #3d3e42">
<svg class="b" style="left:39px;top:26px;" width="30" height="30" viewBox="0 0 30 30"><circle cx="15" cy="15" r="15" fill="#5cb85c"/><path d="M6.300 15 L11.700 20.300 L23.800 8.400" fill="none" stroke="#23242d" stroke-width="2.600"/></svg>
<span class="t" style="left:115.64px;top:26px;font-size:27.5px;line-height:35px;font-family:var(--lmono);color:#5b87d9;transform-origin:0 0;transform:scaleX(0.9655);">61750</span>
<span class="t" style="left:356.04px;top:26px;font-size:27.5px;line-height:35px;font-family:var(--lmono);color:#ffffff;transform-origin:0 0;transform:scaleX(0.9655);">6-Feb-2023 17:35:00</span>
<span class="t" style="left:756.08px;top:26px;font-size:27.5px;line-height:35px;font-family:var(--lmono);color:#5b87d9;transform-origin:0 0;transform:scaleX(0.9655);">bafy2...dxbry</span>
<svg class="b" style="left:974px;top:30px;" width="20" height="22" viewBox="0 0 21 23"><g fill="none" stroke="#787a80" stroke-width="2"><rect x="6" y="6" width="13" height="15" rx="1.500"/><path d="M15 2 H3.500 A1.500 1.500 0 0 0 2 3.500 V17"/></g></svg>
<span class="t" style="left:1077.01px;top:26px;font-size:27.5px;line-height:35px;font-family:var(--lmono);color:#5b87d9;transform-origin:0 0;transform:scaleX(0.9655);">f410f...yq23a</span>
<svg class="b" style="left:1294px;top:30px;" width="20" height="22" viewBox="0 0 21 23"><g fill="none" stroke="#787a80" stroke-width="2"><rect x="6" y="6" width="13" height="15" rx="1.500"/><path d="M15 2 H3.500 A1.500 1.500 0 0 0 2 3.500 V17"/></g></svg>
<span class="t" style="left:1416.41px;top:26px;font-size:27.5px;line-height:35px;font-family:var(--lmono);color:#5b87d9;transform-origin:0 0;transform:scaleX(0.9655);">f410f...fnihq</span>
<svg class="b" style="left:1648px;top:30px;" width="20" height="22" viewBox="0 0 21 23"><g fill="none" stroke="#787a80" stroke-width="2"><rect x="6" y="6" width="13" height="15" rx="1.500"/><path d="M15 2 H3.500 A1.500 1.500 0 0 0 2 3.500 V17"/></g></svg>
<div class="b" style="left:1756px;top:17px;width:205px;height:49px;background:#a9a9ae;border-radius:10px;"></div>
<span class="t" style="left:1768.86px;top:25px;font-size:25px;line-height:32px;color:#5c5c60;transform-origin:0 0;transform:scaleX(1.0583);">InvokeContract</span>
<span class="t" style="left:2085.33px;top:27px;font-size:26.5px;line-height:34px;font-family:var(--mono);color:#ffffff;">2</span>
<span class="t" style="left:2406.44px;top:26px;font-size:25.5px;line-height:32px;font-family:var(--mono);color:#ffffff;transform-origin:0 0;transform:scaleX(1.0377);">{ "Params": "0x58a4d7b6e9d4</span>
</div>
<div class="b" style="left:0;top:436px;width:2588px;height:84px;background:transparent;border-bottom:2px solid #3d3e42">
<svg class="b" style="left:39px;top:26px;" width="30" height="30" viewBox="0 0 30 30"><circle cx="15" cy="15" r="15" fill="#5cb85c"/><path d="M6.300 15 L11.700 20.300 L23.800 8.400" fill="none" stroke="#23242d" stroke-width="2.600"/></svg>
<span class="t" style="left:115.64px;top:26px;font-size:27.5px;line-height:35px;font-family:var(--lmono);color:#5b87d9;transform-origin:0 0;transform:scaleX(0.9655);">61766</span>
<span class="t" style="left:356.04px;top:26px;font-size:27.5px;line-height:35px;font-family:var(--lmono);color:#ffffff;transform-origin:0 0;transform:scaleX(0.9655);">6-Feb-2023 17:43:00</span>
<span class="t" style="left:756.08px;top:26px;font-size:27.5px;line-height:35px;font-family:var(--lmono);color:#5b87d9;transform-origin:0 0;transform:scaleX(0.9655);">bafy2...5if2o</span>
<svg class="b" style="left:974px;top:30px;" width="20" height="22" viewBox="0 0 21 23"><g fill="none" stroke="#787a80" stroke-width="2"><rect x="6" y="6" width="13" height="15" rx="1.500"/><path d="M15 2 H3.500 A1.500 1.500 0 0 0 2 3.500 V17"/></g></svg>
<span class="t" style="left:1077.01px;top:26px;font-size:27.5px;line-height:35px;font-family:var(--lmono);color:#5b87d9;transform-origin:0 0;transform:scaleX(0.9655);">f410f...yq23a</span>
<svg class="b" style="left:1294px;top:30px;" width="20" height="22" viewBox="0 0 21 23"><g fill="none" stroke="#787a80" stroke-width="2"><rect x="6" y="6" width="13" height="15" rx="1.500"/><path d="M15 2 H3.500 A1.500 1.500 0 0 0 2 3.500 V17"/></g></svg>
<span class="t" style="left:1416.41px;top:26px;font-size:27.5px;line-height:35px;font-family:var(--lmono);color:#5b87d9;transform-origin:0 0;transform:scaleX(0.9655);">f410f...fnihq</span>
<svg class="b" style="left:1648px;top:30px;" width="20" height="22" viewBox="0 0 21 23"><g fill="none" stroke="#787a80" stroke-width="2"><rect x="6" y="6" width="13" height="15" rx="1.500"/><path d="M15 2 H3.500 A1.500 1.500 0 0 0 2 3.500 V17"/></g></svg>
<div class="b" style="left:1756px;top:17px;width:205px;height:49px;background:#a9a9ae;border-radius:10px;"></div>
<span class="t" style="left:1768.86px;top:25px;font-size:25px;line-height:32px;color:#5c5c60;transform-origin:0 0;transform:scaleX(1.0583);">InvokeContract</span>
<span class="t" style="left:2085.33px;top:27px;font-size:26.5px;line-height:34px;font-family:var(--mono);color:#ffffff;">2</span>
<span class="t" style="left:2406.44px;top:26px;font-size:25.5px;line-height:32px;font-family:var(--mono);color:#ffffff;transform-origin:0 0;transform:scaleX(1.0377);">{ "Params": "0x58a4d7b6e9d4</span>
</div>
</div>
</main>
<aside class="b" style="left:2908px;top:713px;width:74px;height:310px;background:#4a86f0;border-radius:20px 0 0 20px;box-shadow:0 5px 14px rgba(0,0,0,.32);"></aside>
<svg class="b" style="left:2925px;top:730px;" width="50" height="46" viewBox="2925 730 50 46"><defs><linearGradient id="sq" gradientUnits="userSpaceOnUse" x1="2941" y1="0" x2="2953" y2="0"><stop offset="0" stop-color="#fff" stop-opacity="0"/><stop offset="1" stop-color="#fff"/></linearGradient></defs><g fill="none" stroke="#fff" stroke-width="3.5" stroke-linejoin="round" stroke-linecap="round"><circle cx="2955.25" cy="742.9" r="4.7"/><path d="M2951.9 739.6 L2933.75 758.3 V764.15 H2940 L2958.6 746.3"/><path d="M2942 767.4 Q2953.500 770.6 2967 765.2" stroke="url(#sq)"/></g></svg>
<span class="t" style="left:2959.92px;top:968px;font-size:28px;line-height:35px;color:#fff;transform-origin:1.28px 27.00px;transform:rotate(-90deg) scaleX(1.0030);-webkit-text-stroke:1px #fff;">Share feedback</span>
<footer>
<svg class="b" style="left:2556px;top:1699.3px;" width="22" height="24.8" viewBox="0 0 24 27"><g fill="none" stroke="#787a80" stroke-width="1.9" stroke-linejoin="round"><path d="M12 1.500 L22.500 7.500 V19.500 L12 25.500 L1.500 19.500 V7.500 Z"/><path d="M1.500 7.500 L12 13.500 L22.500 7.500 M12 13.500 V25.500"/></g></svg>
<span class="t" style="left:2595.10px;top:1696px;font-size:25px;line-height:32px;color:#787a80;letter-spacing:-0.157px;">144634</span>
<svg class="b" style="left:2797px;top:1700px;" width="24" height="24" viewBox="0 0 24 24"><circle cx="12" cy="12" r="11" fill="none" stroke="#5cb85c" stroke-width="1.6"/><circle cx="12" cy="12" r="8.6" fill="#5cb85c"/></svg>
<span class="t" style="left:2838.81px;top:1696px;font-size:25px;line-height:32px;color:#787a80;transform-origin:0 0;transform:scaleX(1.0090);">Online</span>
</footer>
<div class="b" style="left:2971px;top:1727px;width:11px;height:11px;background:radial-gradient(circle at 0 0,#000 10.500px,#2a2a2a 11.500px)"></div>
</div>
</body>
</html>
